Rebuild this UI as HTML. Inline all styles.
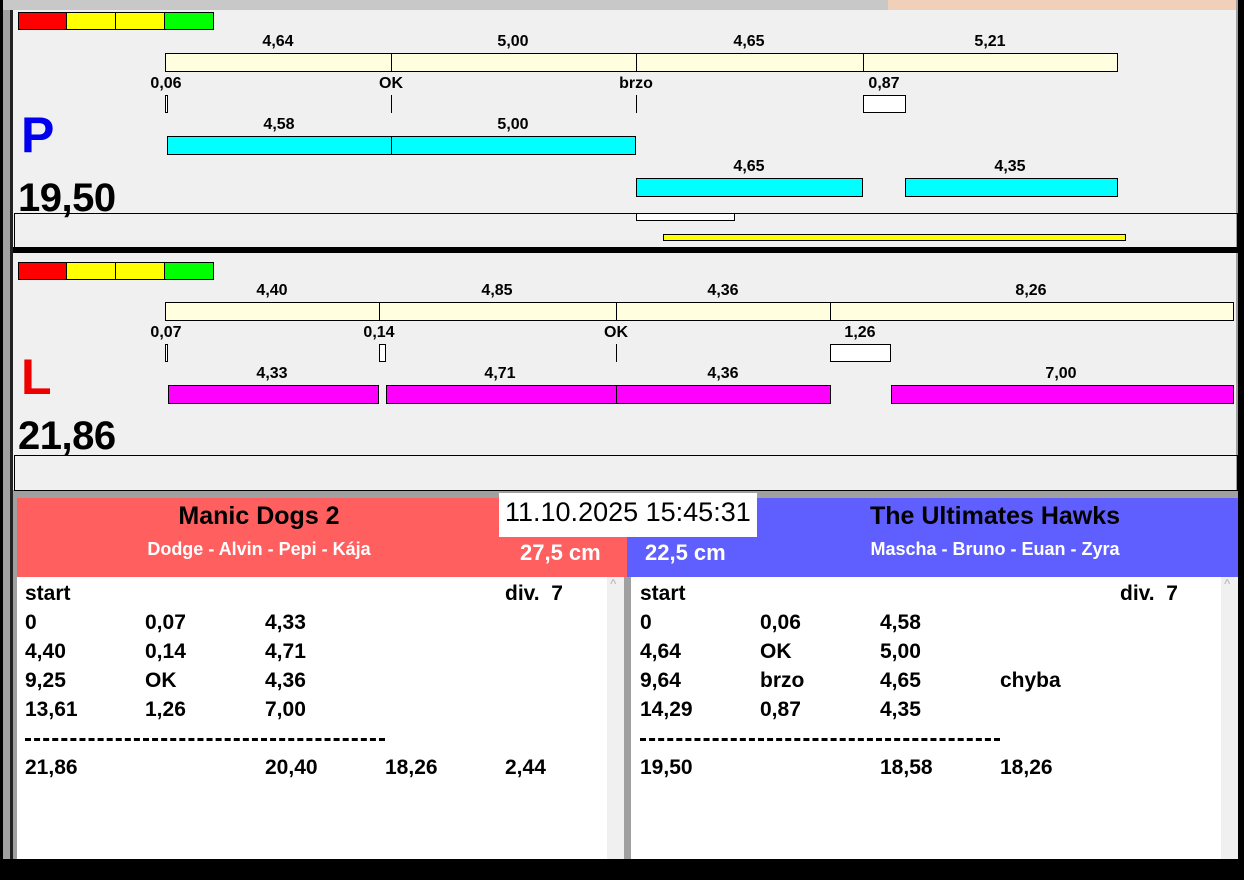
<!DOCTYPE html>
<html><head><meta charset="utf-8"><style>
*{margin:0;padding:0;box-sizing:border-box}
body{width:1244px;height:880px;position:relative;overflow:hidden;background:#a0a0a0;font-family:"Liberation Sans",Arial,sans-serif;font-weight:bold}
div{position:absolute}
.l{font-size:16px;transform:translateX(-50%);white-space:nowrap;line-height:16px;margin-top:2px}
.cr{background:#ffffe0;border:1px solid #000}
.cy{background:#00ffff;border:1px solid #000}
.mg{background:#ff00ff;border:1px solid #000}
.v{width:1px;background:#000}
.t{font-size:21px;line-height:24px;white-space:nowrap;margin-top:1px}
</style></head><body>
<div style="left:0;top:0;width:1244px;height:10px;background:#c8c8c8"></div>
<div style="left:888px;top:0;width:350px;height:12px;background:#f0d0b8"></div>
<div style="left:0;top:0;width:3px;height:880px;background:#000"></div>
<div style="left:10px;top:10px;width:3px;height:850px;background:#222"></div>
<div style="left:1238px;top:0;width:6px;height:880px;background:#000"></div>
<div style="left:1236px;top:0;width:2px;height:860px;background:#a0a0a0"></div>
<div style="left:13px;top:10px;width:1223px;height:480px;background:#f0f0f0"></div>
<div style="left:18px;top:12px;width:49px;height:18px;background:#f00;border:1px solid #000"></div>
<div style="left:66px;top:12px;width:50px;height:18px;background:#ff0;border:1px solid #000"></div>
<div style="left:115px;top:12px;width:50px;height:18px;background:#ff0;border:1px solid #000"></div>
<div style="left:164px;top:12px;width:50px;height:18px;background:#0f0;border:1px solid #000"></div>
<div class="l" style="left:278px;top:32px">4,64</div>
<div class="l" style="left:513px;top:32px">5,00</div>
<div class="l" style="left:749px;top:32px">4,65</div>
<div class="l" style="left:990px;top:32px">5,21</div>
<div class="cr" style="left:165px;top:53px;width:953px;height:19px"></div>
<div class="v" style="left:391px;top:53px;height:19px"></div>
<div class="v" style="left:636px;top:53px;height:19px"></div>
<div class="v" style="left:863px;top:53px;height:19px"></div>
<div class="l" style="left:166px;top:74px">0,06</div>
<div class="l" style="left:391px;top:74px">OK</div>
<div class="l" style="left:636px;top:74px">brzo</div>
<div class="l" style="left:884px;top:74px">0,87</div>
<div style="left:165px;top:95px;width:3px;height:18px;border:1px solid #000;background:#fff"></div>
<div class="v" style="left:391px;top:95px;height:18px"></div>
<div class="v" style="left:636px;top:95px;height:18px"></div>
<div style="left:863px;top:95px;width:43px;height:18px;border:1px solid #000;background:#fff"></div>
<div style="left:21px;top:107px;font-size:50px;line-height:56px;color:#0000ee">P</div>
<div class="l" style="left:279px;top:115px">4,58</div>
<div class="l" style="left:513px;top:115px">5,00</div>
<div class="cy" style="left:167px;top:136px;width:469px;height:19px"></div>
<div class="v" style="left:391px;top:136px;height:19px"></div>
<div class="l" style="left:749px;top:157px">4,65</div>
<div class="l" style="left:1010px;top:157px">4,35</div>
<div class="cy" style="left:636px;top:178px;width:227px;height:19px"></div>
<div class="cy" style="left:905px;top:178px;width:213px;height:19px"></div>
<div style="left:18px;top:175px;font-size:40px;line-height:46px;letter-spacing:-0.5px">19,50</div>
<div style="left:14px;top:213px;width:1224px;height:35px;border:1px solid #000"></div>
<div style="left:636px;top:213px;width:99px;height:8px;border:1px solid #000;background:#fff"></div>
<div style="left:663px;top:234px;width:463px;height:7px;border:1px solid #000;background:#ff0"></div>
<div style="left:13px;top:247px;width:1225px;height:6px;background:#000"></div>
<div style="left:18px;top:262px;width:49px;height:18px;background:#f00;border:1px solid #000"></div>
<div style="left:66px;top:262px;width:50px;height:18px;background:#ff0;border:1px solid #000"></div>
<div style="left:115px;top:262px;width:50px;height:18px;background:#ff0;border:1px solid #000"></div>
<div style="left:164px;top:262px;width:50px;height:18px;background:#0f0;border:1px solid #000"></div>
<div class="l" style="left:272px;top:281px">4,40</div>
<div class="l" style="left:497px;top:281px">4,85</div>
<div class="l" style="left:723px;top:281px">4,36</div>
<div class="l" style="left:1031px;top:281px">8,26</div>
<div class="cr" style="left:165px;top:302px;width:1069px;height:19px"></div>
<div class="v" style="left:379px;top:302px;height:19px"></div>
<div class="v" style="left:616px;top:302px;height:19px"></div>
<div class="v" style="left:830px;top:302px;height:19px"></div>
<div class="l" style="left:166px;top:323px">0,07</div>
<div class="l" style="left:379px;top:323px">0,14</div>
<div class="l" style="left:616px;top:323px">OK</div>
<div class="l" style="left:860px;top:323px">1,26</div>
<div style="left:165px;top:344px;width:3px;height:18px;border:1px solid #000;background:#fff"></div>
<div style="left:379px;top:344px;width:7px;height:18px;border:1px solid #000;background:#fff"></div>
<div class="v" style="left:616px;top:344px;height:18px"></div>
<div style="left:830px;top:344px;width:61px;height:18px;border:1px solid #000;background:#fff"></div>
<div style="left:21px;top:349px;font-size:50px;line-height:56px;color:#ee0000">L</div>
<div class="l" style="left:272px;top:364px">4,33</div>
<div class="l" style="left:500px;top:364px">4,71</div>
<div class="l" style="left:723px;top:364px">4,36</div>
<div class="l" style="left:1061px;top:364px">7,00</div>
<div class="mg" style="left:168px;top:385px;width:211px;height:19px"></div>
<div class="mg" style="left:386px;top:385px;width:445px;height:19px"></div>
<div class="v" style="left:616px;top:385px;height:19px"></div>
<div class="mg" style="left:891px;top:385px;width:343px;height:19px"></div>
<div style="left:18px;top:413px;font-size:40px;line-height:46px;letter-spacing:-0.5px">21,86</div>
<div style="left:14px;top:455px;width:1224px;height:36px;border:1px solid #000"></div>
<div style="left:17px;top:498px;width:610px;height:79px;background:#ff5f5f"></div>
<div style="left:627px;top:498px;width:611px;height:79px;background:#5f5fff"></div>
<div style="left:499px;top:493px;width:258px;height:44px;background:#fff"></div>
<div style="left:505px;top:497px;font-size:27px;font-weight:normal;line-height:30px">11.10.2025 15:45:31</div>
<div style="left:259px;top:502px;font-size:25px;transform:translateX(-50%);white-space:nowrap">Manic Dogs 2</div>
<div style="left:259px;top:539px;font-size:18px;color:#fff;transform:translateX(-50%);white-space:nowrap">Dodge - Alvin - Pepi - Kája</div>
<div style="left:520px;top:540px;font-size:22px;color:#fff;white-space:nowrap">27,5 cm</div>
<div style="left:645px;top:540px;font-size:22px;color:#fff;white-space:nowrap">22,5 cm</div>
<div style="left:995px;top:502px;font-size:25px;transform:translateX(-50%);white-space:nowrap">The Ultimates Hawks</div>
<div style="left:995px;top:539px;font-size:18px;color:#fff;transform:translateX(-50%);white-space:nowrap">Mascha - Bruno - Euan - Zyra</div>
<div style="left:17px;top:577px;width:590px;height:283px;background:#fff"></div>
<div style="left:607px;top:577px;width:17px;height:283px;background:#f0f0f0"></div>
<div style="left:624px;top:577px;width:7px;height:283px;background:#a0a0a0"></div>
<div style="left:631px;top:577px;width:590px;height:283px;background:#fff"></div>
<div style="left:1221px;top:577px;width:17px;height:283px;background:#f0f0f0"></div>
<div style="left:610px;top:578px;font-size:11px;color:#bbb">^</div>
<div style="left:1224px;top:578px;font-size:11px;color:#bbb">^</div>
<div style="left:0;top:859px;width:1244px;height:21px;background:#000"></div>

<div class="t" style="left:25px;top:581px">start</div><div class="t" style="left:505px;top:581px">div.&nbsp; 7</div>
<div class="t" style="left:25px;top:610px">0</div><div class="t" style="left:145px;top:610px">0,07</div><div class="t" style="left:265px;top:610px">4,33</div>
<div class="t" style="left:25px;top:639px">4,40</div><div class="t" style="left:145px;top:639px">0,14</div><div class="t" style="left:265px;top:639px">4,71</div>
<div class="t" style="left:25px;top:668px">9,25</div><div class="t" style="left:145px;top:668px">OK</div><div class="t" style="left:265px;top:668px">4,36</div>
<div class="t" style="left:25px;top:697px">13,61</div><div class="t" style="left:145px;top:697px">1,26</div><div class="t" style="left:265px;top:697px">7,00</div>
<div style="left:25px;top:738px;width:360px;height:3px;border-top:3px dashed #000"></div>
<div class="t" style="left:25px;top:755px">21,86</div><div class="t" style="left:265px;top:755px">20,40</div><div class="t" style="left:385px;top:755px">18,26</div><div class="t" style="left:505px;top:755px">2,44</div>

<div class="t" style="left:640px;top:581px">start</div><div class="t" style="left:1120px;top:581px">div.&nbsp; 7</div>
<div class="t" style="left:640px;top:610px">0</div><div class="t" style="left:760px;top:610px">0,06</div><div class="t" style="left:880px;top:610px">4,58</div>
<div class="t" style="left:640px;top:639px">4,64</div><div class="t" style="left:760px;top:639px">OK</div><div class="t" style="left:880px;top:639px">5,00</div>
<div class="t" style="left:640px;top:668px">9,64</div><div class="t" style="left:760px;top:668px">brzo</div><div class="t" style="left:880px;top:668px">4,65</div><div class="t" style="left:1000px;top:668px">chyba</div>
<div class="t" style="left:640px;top:697px">14,29</div><div class="t" style="left:760px;top:697px">0,87</div><div class="t" style="left:880px;top:697px">4,35</div>
<div style="left:640px;top:738px;width:360px;height:3px;border-top:3px dashed #000"></div>
<div class="t" style="left:640px;top:755px">19,50</div><div class="t" style="left:880px;top:755px">18,58</div><div class="t" style="left:1000px;top:755px">18,26</div>
</body></html>
